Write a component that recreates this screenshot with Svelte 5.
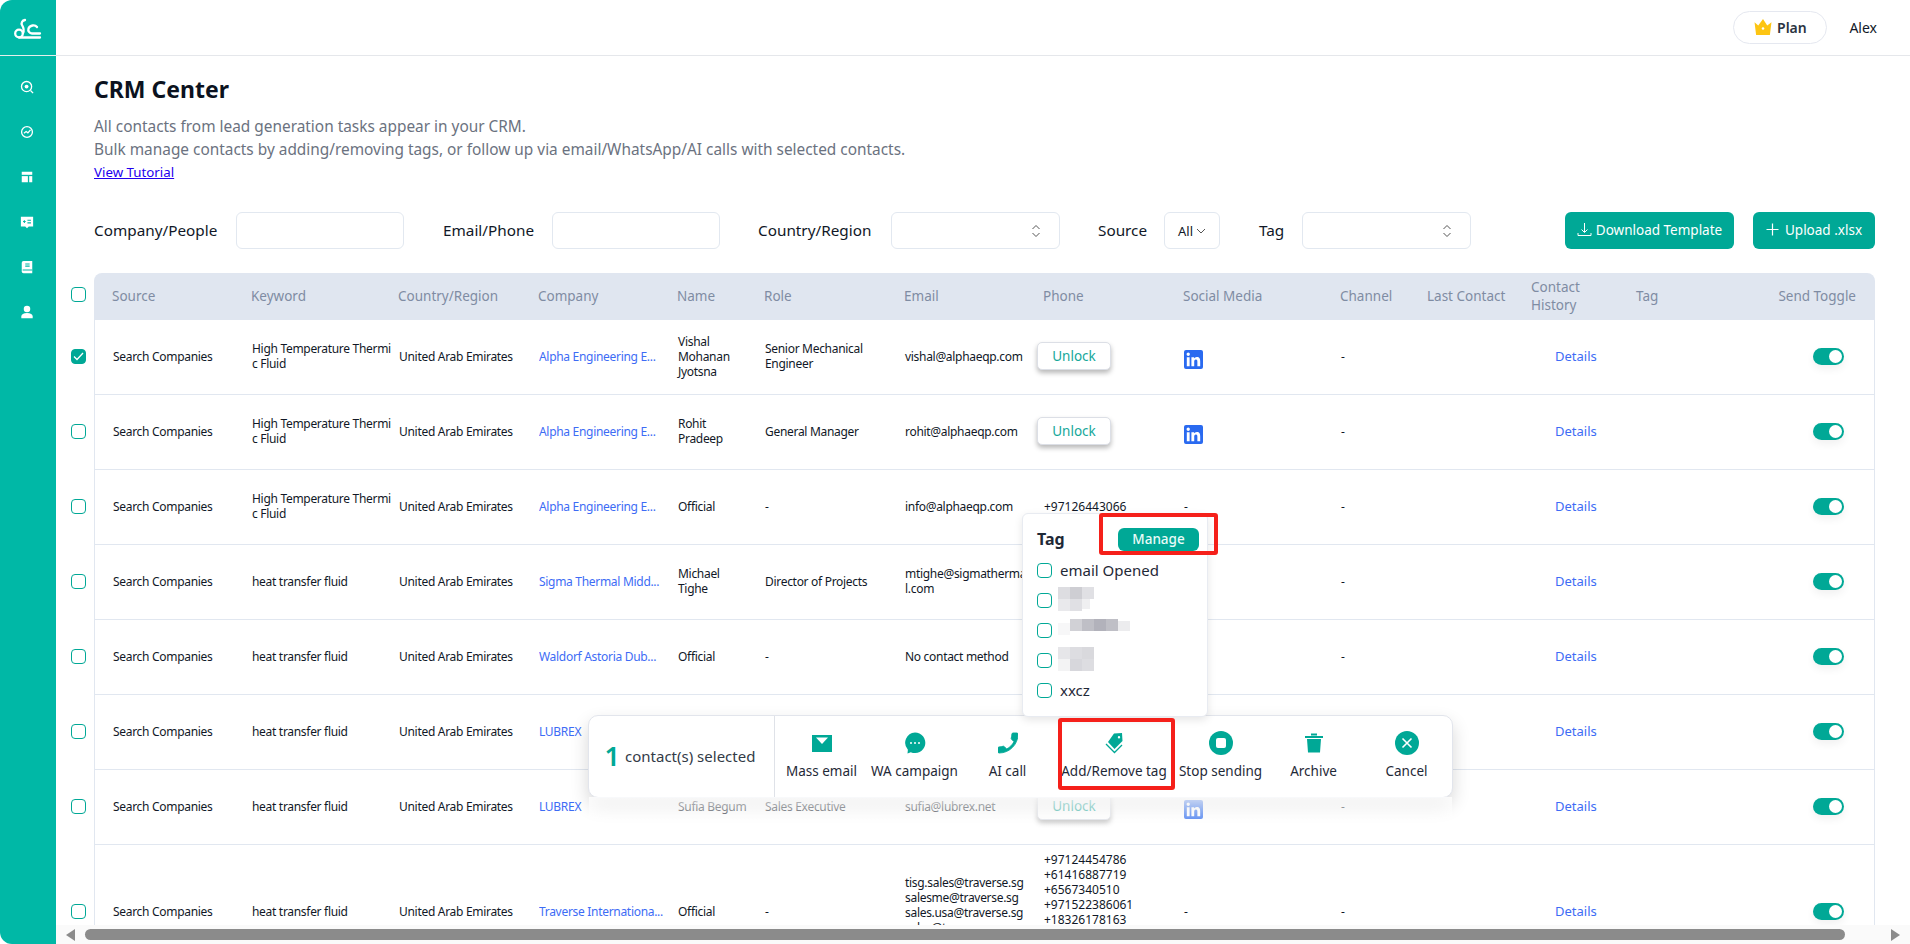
<script>
  const cols = ['Source','Keyword','Country/Region','Company','Name','Role','Email','Phone','Social Media','Channel','Last Contact','Contact History','Tag','Send Toggle'];
  const hi = 'High Temperature Thermic Fluid';
  const ht = 'heat transfer fluid';
  const uae = 'United Arab Emirates';
  const rows = [
    {checked:true, kw:hi, co:'Alpha Engineering E...', name:'Vishal Mohanan Jyotsna', role:'Senior Mechanical Engineer', email:['vishal@alphaeqp.com'], unlock:true, li:true, ch:'-'},
    {kw:hi, co:'Alpha Engineering E...', name:'Rohit Pradeep', role:'General Manager', email:['rohit@alphaeqp.com'], unlock:true, li:true, ch:'-'},
    {kw:hi, co:'Alpha Engineering E...', name:'Official', role:'-', email:['info@alphaeqp.com'], phones:['+97126443066'], social:'-', ch:'-'},
    {kw:ht, co:'Sigma Thermal Midd...', name:'Michael Tighe', role:'Director of Projects', email:['mtighe@sigmatherma','l.com'], ch:'-'},
    {kw:ht, co:'Waldorf Astoria Dub...', name:'Official', role:'-', email:['No contact method'], ch:'-'},
    {kw:ht, co:'LUBREX', name:'', role:'', email:[], ch:''},
    {kw:ht, co:'LUBREX', name:'Sufia Begum', role:'Sales Executive', email:['sufia@lubrex.net'], unlock:true, li:true, ch:'-'},
    {tall:true, kw:ht, co:'Traverse Internationa...', name:'Official', role:'-', email:['tisg.sales@traverse.sg','salesme@traverse.sg','sales.usa@traverse.sg','sales@traverse.sg'], phones:['+97124454786','+61416887719','+6567340510','+971522386061','+18326178163'], social:'-', ch:'-'}
  ];
  const tags = ['email Opened','','','','xxcz'];
  const mosaics = [
    null,
    [[0,0,12,12,.22],[12,0,12,12,.32],[24,0,12,12,.2],[0,12,12,12,.14],[12,12,12,12,.2],[24,12,8,10,.1]],
    [[0,6,12,12,.05],[12,2,12,12,.3],[24,2,12,12,.42],[36,2,12,12,.5],[48,2,12,12,.42],[60,4,12,10,.12]],
    [[0,0,12,12,.16],[12,0,12,12,.22],[24,0,12,12,.25],[0,12,12,12,.08],[12,12,12,12,.26],[24,12,12,12,.22]],
    null
  ];
</script>

<div class="page">
  <aside class="side">
    <div class="logo">
      <svg width="28" height="24" viewBox="14 16 28 24" fill="none" stroke="#fff" stroke-width="2.300" stroke-linecap="round"><circle cx="19" cy="32.500" r="3.800"/><path d="M19 36.500h21"/><path d="M25 19c-3 .5-4 3-3 5 1.500 2.500 2.500 5 1 8"/><path d="M37 26c-2-2.500-7-2-8.500 1.500-.8 2.500 1 5 3.500 5h8"/></svg>
    </div>
    <nav class="nav">
      <svg viewBox="0 0 16 16" fill="none" stroke="#fff" stroke-width="1.500"><circle cx="7.500" cy="7.500" r="5.800"/><circle cx="7.500" cy="7.500" r="2.200" fill="#fff" stroke="none"/><path d="M12 12l3 3"/></svg>
      <svg viewBox="0 0 16 16" fill="none" stroke="#fff" stroke-width="1.500"><circle cx="8" cy="8" r="6.200"/><path d="M4.500 9.500l2.500-2 2 1.500 3-3.500"/></svg>
      <svg viewBox="0 0 16 16" fill="#fff"><rect x="2" y="2" width="12" height="3.500"/><rect x="2" y="7" width="7" height="7"/><rect x="10.500" y="7" width="3.500" height="7"/></svg>
      <svg viewBox="0 0 16 16"><path fill="#fff" d="M1 2h14v11h-5l-2 2-2-2H1z"/><path stroke="#00b8a6" stroke-width="1.200" d="M3.500 7.500h3M5 6v3M8.500 6h4M8.500 9h4" fill="none"/></svg>
      <svg viewBox="0 0 16 16"><path fill="#fff" d="M4 1h10v14H4a2 2 0 0 1-2-2V3a2 2 0 0 1 2-2z"/><path stroke="#00b8a6" stroke-width="1.200" d="M6 4.500h5M6 7h5M3 11.500h11" fill="none"/></svg>
      <svg viewBox="0 0 16 16" fill="#fff"><circle cx="8" cy="4.500" r="3.700"/><path d="M1.500 15v-2c0-2.500 2.500-4 6.500-4s6.500 1.500 6.500 4v2z"/></svg>
    </nav>
  </aside>

  <div class="main">
    <header class="top">
      <button class="plan">
        <svg width="18" height="16" viewBox="0 0 17 15"><path fill="#fdc513" d="M0.500 3l3.500 3L8.500 0l4 6L16.500 3 15 15H2z"/><circle cx="8.500" cy="9" r="1.200" fill="#fff"/></svg>
        <span>Plan</span>
      </button>
      <span class="user">Alex</span>
    </header>

    <div class="scroll">
      <h1>CRM Center</h1>
      <p class="desc">All contacts from lead generation tasks appear in your CRM.<br>Bulk manage contacts by adding/removing tags, or follow up via email/WhatsApp/AI calls with selected contacts.</p>
      <a class="tut" href="#tutorial">View Tutorial</a>

      <div class="filters">
        <label class="lb l1" for="f1">Company/People</label><input id="f1" class="ctl w168" />
        <label class="lb l2 gap" for="f2">Email/Phone</label><input id="f2" class="ctl w168" />
        <span class="lb l3 gap">Country/Region</span>
        <div class="ctl w169 sel"><svg width="10" height="14" viewBox="0 0 10 14" fill="none" stroke="#555" stroke-width="1"><path d="M1.500 5L5 1.500 8.500 5M1.500 9L5 12.500 8.500 9"/></svg></div>
        <span class="lb l4 gap">Source</span>
        <div class="ctl w56 all"><span>All</span><svg width="10" height="6" viewBox="0 0 10 6" fill="none" stroke="#555" stroke-width="1"><path d="M1 1l4 4 4-4"/></svg></div>
        <span class="lb l5 gap">Tag</span>
        <div class="ctl w169 sel"><svg width="10" height="14" viewBox="0 0 10 14" fill="none" stroke="#555" stroke-width="1"><path d="M1.500 5L5 1.500 8.500 5M1.500 9L5 12.500 8.500 9"/></svg></div>
        <div class="btns">
          <button class="teal dl"><svg width="15" height="15" viewBox="0 0 15 15" fill="none" stroke="#fff" stroke-width="1"><path d="M7.500 1v9M4.500 7.500l3 3 3-3M1 11v2.500h13V11"/></svg>Download Template</button>
          <button class="teal up"><svg width="13" height="13" viewBox="0 0 13 13" fill="none" stroke="#fff" stroke-width="1.200"><path d="M6.500 0.500v12M0.500 6.500h12"/></svg>Upload .xlsx</button>
        </div>
      </div>

      <div class="table">
        <div class="line">
          <span class="cb head"></span>
          <div class="grid hd">
            {#each cols as c, i}
              <div class="th" class:narrow={i === 11} class:end={i === 13}>{c}</div>
            {/each}
          </div>
        </div>
        {#each rows as r}
          <div class="line" class:tall={r.tall}>
            <span class="cb row" class:on={r.checked}>
              {#if r.checked}<svg width="11" height="9" viewBox="0 0 11 9" fill="none" stroke="#fff" stroke-width="1.300"><path d="M1 4.500l3 3 6-6.500"/></svg>{/if}
            </span>
            <div class="grid bd">
              <div class="td">Search Companies</div>
              <div class="td brk">{r.kw}</div>
              <div class="td">{uae}</div>
              <div class="td co">{r.co}</div>
              <div class="td nm">{r.name}</div>
              <div class="td rl">{r.role}</div>
              <div class="td brk em" class:top-em={r.tall}>
                {#each r.email as e}<div>{e}</div>{/each}
              </div>
              <div class="td ph" class:top-ph={r.tall}>
                {#if r.unlock}<button class="unlock">Unlock</button>{/if}
                {#if r.phones}{#each r.phones as p}<div>{p}</div>{/each}{/if}
              </div>
              <div class="td so">
                {#if r.li}
                  <svg class="li" width="19" height="19" viewBox="0 0 24 24"><rect width="24" height="24" rx="2.500" fill="#2a6af0"/><path fill="#fff" d="M20.447 20.452h-3.554v-5.569c0-1.328-.027-3.037-1.852-3.037-1.853 0-2.136 1.445-2.136 2.939v5.667H9.351V9h3.414v1.561h.046c.477-.9 1.637-1.85 3.37-1.85 3.601 0 4.267 2.37 4.267 5.455v6.286zM5.337 7.433c-1.144 0-2.063-.926-2.063-2.065 0-1.138.92-2.063 2.063-2.063 1.14 0 2.064.925 2.064 2.063 0 1.139-.925 2.065-2.064 2.065zm1.782 13.019H3.555V9h3.564v11.452z"/></svg>
                {:else if r.social}{r.social}{/if}
              </div>
              <div class="td">{r.ch}</div>
              <div class="td"></div>
              <div class="td det"><a href="#details">Details</a></div>
              <div class="td"></div>
              <div class="td tg"><span class="toggle"><i></i></span></div>
            </div>
          </div>
        {/each}
      </div>
    </div>

    <div class="sbar">
      <svg width="9" height="12" viewBox="0 0 9 12"><path fill="#8b8b8b" d="M9 0v12L0 6z"/></svg>
      <div class="thumb"></div>
      <svg width="9" height="12" viewBox="0 0 9 12"><path fill="#8b8b8b" d="M0 0v12l9-6z"/></svg>
    </div>
  </div>

  <section class="bar">
    <div class="cnt"><strong>1</strong><span>contact(s) selected</span></div>
    <div class="acts">
      <div class="act">
        <svg width="22" height="22" viewBox="0 0 22 22"><path fill="#00a896" d="M1 3h20v17H1z"/><path fill="#fff" d="M5 5.500h12L11 12z"/></svg>
        <span>Mass email</span>
      </div>
      <div class="act">
        <svg width="22" height="22" viewBox="0 0 22 22"><path fill="#00a896" d="M11 0.500a10.300 10.300 0 1 1-4.200 19.700L3.500 21.500l.4-3.800A10.300 10.300 0 0 1 11 .5z"/><circle cx="7" cy="11" r="1" fill="#fff"/><circle cx="11" cy="11" r="1" fill="#fff"/><circle cx="15" cy="11" r="1" fill="#fff"/></svg>
        <span>WA campaign</span>
      </div>
      <div class="act">
        <svg width="20" height="20" viewBox="3 3 18 18"><path transform="translate(24 0) scale(-1 1)" fill="#00a896" stroke="#00a896" stroke-width=".8" d="M6.620 10.790c1.440 2.830 3.760 5.140 6.590 6.590l2.200-2.200c.27-.27.67-.36 1.020-.24 1.120.37 2.330.57 3.570.57.55 0 1 .45 1 1V20c0 .55-.45 1-1 1-9.390 0-17-7.610-17-17 0-.55.45-1 1-1h3.500c.55 0 1 .45 1 1 0 1.250.2 2.450.57 3.570.11.35.03.74-.25 1.020l-2.200 2.200z"/></svg>
        <span>AI call</span>
      </div>
      <div class="act wide">
        <svg width="22" height="22" viewBox="0 0 22 22"><path fill="#00a896" fill-rule="evenodd" d="M11 1.500l8-.5.500 8-8 8-6.500-7zM16 4a1.200 1.200 0 1 0 0 2.400A1.200 1.200 0 0 0 16 4z"/><path fill="none" stroke="#00a896" stroke-width="1.300" d="M3 12l8.500 8.500 7.500-7.500"/></svg>
        <span>Add/Remove tag</span>
      </div>
      <div class="act">
        <svg width="24" height="24" viewBox="0 0 24 24"><circle cx="12" cy="12" r="12" fill="#00a896"/><rect x="7" y="7" width="10" height="10" rx="2" fill="#fff"/></svg>
        <span>Stop sending</span>
      </div>
      <div class="act">
        <svg width="20" height="22" viewBox="0 0 20 22"><path fill="#00a896" d="M1 4h18v2H1zM7 1.500h6v2H7zM3 7h14l-1 13.500H4z"/></svg>
        <span>Archive</span>
      </div>
      <div class="act">
        <svg width="24" height="24" viewBox="0 0 24 24"><circle cx="12" cy="12" r="12" fill="#00a896"/><path stroke="#fff" stroke-width="1.600" d="M7.500 7.500l9 9M16.500 7.500l-9 9"/></svg>
        <span>Cancel</span>
      </div>
    </div>
  </section>
  <div class="red red2"></div>

  <section class="pop">
    <div class="pop-h"><b>Tag</b><button class="mng">Manage</button></div>
    {#each tags as t, i}
      <div class="opt">
        <span class="cb"></span>
        <span>{t}</span>
        {#if mosaics[i]}
          <svg class="mos" width="76" height="26" viewBox="0 0 76 26">
            {#each mosaics[i] as m}<rect x={m[0]} y={m[1]} width={m[2]} height={m[3]} fill="#667" opacity={m[4]} />{/each}
          </svg>
        {/if}
      </div>
    {/each}
  </section>
  <div class="red red1"></div>
</div>

<style>
  :global(body) { margin: 0; background: #fff; }
  * { box-sizing: border-box; }
  .page { position: relative; display: flex; height: 944px; width: 1910px; overflow: hidden; font-family: "Noto Sans", "Liberation Sans", sans-serif; color: #111827; background: #fff; }
  button { font-family: inherit; cursor: pointer; }

  .side { flex: 0 0 56px; background: #00b8a6; border-radius: 12px 0 0 12px; }
  .logo { height: 56px; display: flex; align-items: center; justify-content: center; border-bottom: 1px solid #e3efec; padding-top: 2px; }
  .nav { display: flex; flex-direction: column; align-items: center; gap: 31px; padding: 24px 2px 0 0; }
  .nav svg { width: 14px; height: 14px; }

  .main { flex: 1; min-width: 0; display: flex; flex-direction: column; }
  .top { flex: 0 0 56px; border-bottom: 1px solid #e5e7eb; display: flex; justify-content: flex-end; align-items: center; padding: 0 33px 1px 0; gap: 22px; }
  .plan { width: 94px; height: 33px; border: 1px solid #e5e8f0; border-radius: 17px; background: #fff; display: flex; align-items: center; justify-content: center; gap: 5px; font-size: 14px; font-weight: 600; color: #2b3442; padding: 0; }
  .user { font-size: 14px; color: #111827; }

  .scroll { flex: 1; min-height: 0; overflow: hidden; padding: 17px 35px 0 38px; }
  h1 { margin: 0; font-size: 23px; line-height: 32px; font-weight: 700; color: #0b1220; }
  .desc { margin: 10px 0 0; font-size: 15.400px; line-height: 23px; color: #6b7280; }
  .tut { display: block; margin-top: 1px; font-size: 13.300px; line-height: 20px; color: #2200ee; text-decoration: underline; }

  .filters { display: flex; align-items: center; margin-top: 30px; height: 37px; }
  .lb { font-size: 15.300px; color: #111827; white-space: nowrap; padding-bottom: 2px; }
  .gap { margin-left: 39px; }
  .l1 { width: 142px; } .l2 { width: 109px; } .l3 { width: 133px; margin-left: 38px; } .l4 { width: 66px; margin-left: 38px; } .l5 { width: 43px; }
  .ctl { height: 37px; border: 1px solid #e2e8f0; border-radius: 6px; background: #fff; outline: none; padding: 0; }
  .w168 { width: 168px; } .w169 { width: 169px; } .w56 { width: 56px; }
  .sel { display: flex; align-items: center; justify-content: flex-end; padding-right: 18px; }
  .all { display: flex; align-items: center; justify-content: center; gap: 3px; font-size: 13px; }
  .btns { margin-left: auto; display: flex; gap: 19px; }
  .teal { height: 37px; border: 0; border-radius: 6px; background: #00a896; color: #fff; font-size: 13.500px; display: flex; align-items: center; justify-content: center; gap: 4px; padding: 0 0 2px; }
  .dl { width: 169px; } .up { width: 122px; gap: 6px; }

  .table { margin: 24px 0 0 -23px; }
  .line { display: flex; align-items: center; height: 75px; }
  .line:first-child { height: 47px; }
  .line.tall { height: 136px; }
  .cb { flex: 0 0 15px; width: 15px; height: 15px; border: 1px solid #00a896; border-radius: 4px; background: #fff; display: inline-flex; align-items: center; justify-content: center; margin-right: 8px; }
  .cb.head { margin-top: -5px; }
  .cb.row { margin-top: -3px; }
  .cb.on { background: #00a896; }

  .grid { flex: 1; height: 100%; display: grid; grid-template-columns: 139px 147px 140px 139px 87px 140px 139px 140px 157px 87px 104px 105px 1fr 96px; padding-left: 19px; }
  .hd { background: #e0e6f0; border-radius: 8px 8px 0 0; padding-left: 18px; }
  .th { align-self: center; font-size: 13.500px; line-height: 18px; color: #7f8ca3; white-space: nowrap; padding-bottom: 2px; }
  .th.narrow { white-space: normal; width: 60px; }
  .th.end { justify-self: end; padding-right: 19px; }
  .bd { border: solid #e1e7f0; border-width: 0 1px 1px 1px; padding-left: 18px; overflow: hidden; }
  .td { align-self: center; font-size: 12px; letter-spacing: -.3px; line-height: 15px; color: #111827; padding-bottom: 2px; }
  .brk { word-break: break-all; padding-right: 7px; }
  .nm { padding-right: 18px; }
  .rl { padding-right: 20px; }
  .co { color: #3d6cf5; white-space: nowrap; overflow: hidden; }
  .em { padding-right: 8px; }
  .top-em { align-self: start; padding-top: 30px; }
  .ph { min-width: 0; letter-spacing: 0; }
  .top-ph { align-self: start; padding-top: 7px; }
  .unlock { display: block; width: 74px; height: 28px; margin-left: -7px; background: #fff; border: 1px solid #dcdfe6; border-radius: 5px; box-shadow: 0 3px 5px rgba(0,0,0,.28); font-size: 13.500px; color: #16a89a; padding: 0; }
  .li { display: block; margin-top: 6px; }
  .det { padding-left: 23px; font-size: 13px; letter-spacing: 0; }
  .det a { color: #3d6cf5; text-decoration: none; }
  .tg { justify-self: end; padding-right: 30px; }
  .toggle { display: block; width: 31px; height: 17px; border-radius: 9px; background: #00a896; position: relative; box-shadow: 0 4px 8px rgba(0,0,0,.06); }
  .toggle i { position: absolute; right: 2px; top: 2px; width: 13px; height: 13px; border-radius: 50%; background: #fff; }

  .sbar { flex: 0 0 19px; background: #fafafa; display: flex; align-items: center; padding: 0 10px; gap: 10px; }
  .thumb { flex: 1; height: 11px; background: #8b8b8b; border-radius: 6px; margin-right: 36px; }

  .pop { position: absolute; z-index: 2; left: 1022px; top: 513px; width: 186px; height: 204px; background: #fff; border: 1px solid #e8ebf1; border-radius: 6px; box-shadow: 0 3px 8px rgba(0,0,0,.1); padding: 13px 8px 0 14px; }
  .pop-h { display: flex; justify-content: space-between; align-items: center; height: 24px; margin-bottom: 4px; }
  .pop-h b { font-size: 16px; color: #1f2937; }
  .mng { width: 81px; height: 23px; border: 0; border-radius: 6px; background: #00a896; color: #e9fbf8; font-size: 13.500px; font-weight: 500; padding: 0; }
  .opt { position: relative; display: flex; align-items: center; height: 30px; font-size: 15px; color: #1f2937; }
  .mos { position: absolute; left: 21px; top: 2px; }
  .red { position: absolute; z-index: 3; border: 4px solid #f5201a; border-radius: 3px; pointer-events: none; }
  .red1 { left: 1099px; top: 513px; width: 119px; height: 42px; }
  .red2 { left: 1058px; top: 718px; width: 117px; height: 72px; }

  .bar { position: absolute; left: 588px; top: 715px; width: 865px; height: 83px; background: #fff; border: 1px solid #e2e5ec; border-radius: 10px; box-shadow: 0 8px 18px rgba(0,0,0,.16); display: flex; }
  .bar::after { content: ""; position: absolute; left: 0; right: 0; top: 100%; height: 36px; background: linear-gradient(rgba(255,255,255,.78), rgba(255,255,255,0)); }
  .cnt { flex: 0 0 186px; border-right: 1px solid #dfe2e8; display: flex; align-items: center; justify-content: center; gap: 5px; font-size: 15px; color: #333b47; padding: 0 3px 2px 0; }
  .cnt strong { font-size: 27px; line-height: 32px; font-weight: 600; color: #00a896; }
  .acts { display: flex; }
  .act { width: 93px; display: flex; flex-direction: column; align-items: center; font-size: 13.500px; color: #1f2937; white-space: nowrap; padding-top: 15px; }
  .act.wide { width: 120px; }
  .act svg { height: 24px; }
  .act span { margin-top: 7px; line-height: 18px; }
</style>
